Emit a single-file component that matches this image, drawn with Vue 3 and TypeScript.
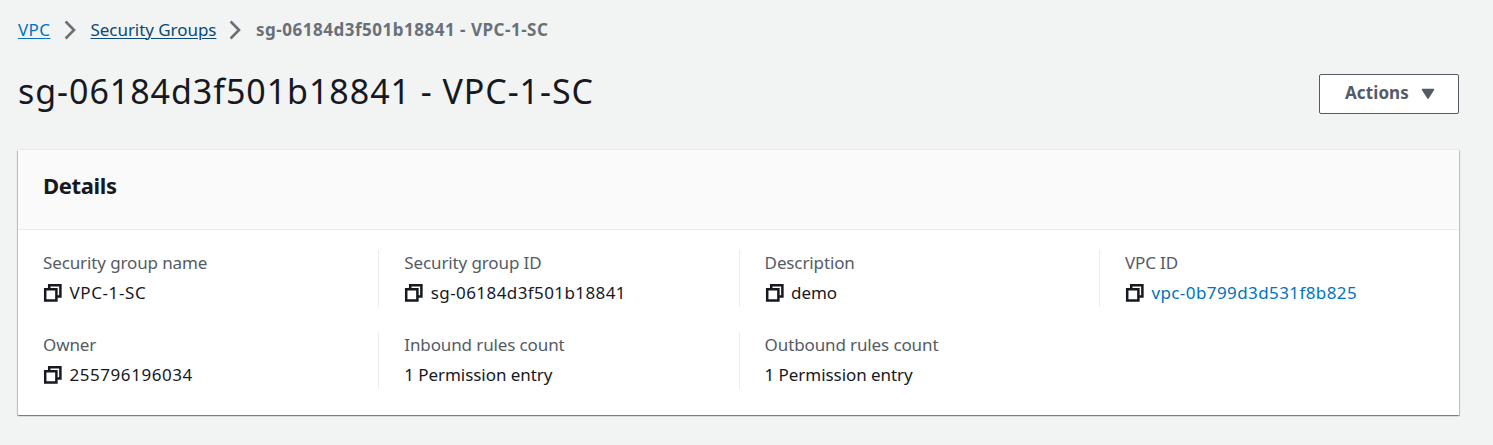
<script setup lang="ts">
interface Field {
  label: string
  value: string
  copy?: boolean
  link?: boolean
  kind: string
}

const groupId = 'sg-06184d3f501b18841'
const groupName = 'VPC-1-SC'

const fields: Field[] = [
  { label: 'Security group name', value: groupName, copy: true, kind: 'name' },
  { label: 'Security group ID', value: groupId, copy: true, kind: 'id' },
  { label: 'Description', value: 'demo', copy: true, kind: 'text' },
  { label: 'VPC ID', value: 'vpc-0b799d3d531f8b825', copy: true, link: true, kind: 'id' },
  { label: 'Owner', value: '255796196034', copy: true, kind: 'number' },
  { label: 'Inbound rules count', value: '1 Permission entry', kind: 'text' },
  { label: 'Outbound rules count', value: '1 Permission entry', kind: 'text' },
]
</script>

<template>
  <main class="page">
    <nav class="crumbs">
      <a class="crumb vpc">VPC</a>
      <svg class="chevron" viewBox="0 0 14 20"><path d="M1.6 1.5 10 10 1.6 18.5" /></svg>
      <a class="crumb groups">Security Groups</a>
      <svg class="chevron" viewBox="0 0 14 20"><path d="M1.6 1.5 10 10 1.6 18.5" /></svg>
      <span class="current">{{ groupId }} - {{ groupName }}</span>
    </nav>
    <header class="heading">
      <h1>{{ groupId }} - {{ groupName }}</h1>
      <button class="actions" type="button">
        <span>Actions</span>
        <svg viewBox="0 0 14 12"><path d="M1.5 1.5h11L7 10.2z" /></svg>
      </button>
    </header>
    <section class="card">
      <div class="card-head"><h2>Details</h2></div>
      <div class="grid">
        <div v-for="f in fields" :key="f.label" class="field">
          <div class="label">{{ f.label }}</div>
          <div class="value">
            <svg v-if="f.copy" class="copy" viewBox="0 0 20 20">
              <path d="M2.2 6.2h11.2v11.2H2.2z" />
              <path d="M6.2 6V2.2h11.2v11.2h-3.8" />
            </svg>
            <span :class="[f.kind, { link: f.link }]">{{ f.value }}</span>
          </div>
        </div>
      </div>
    </section>
  </main>
</template>

<style>
body { margin: 0; background: #f2f3f3; }
</style>

<style scoped>
.page {
  box-sizing: border-box;
  width: 1493px;
  height: 445px;
  padding: 0 34px 0 18px;
  background: #f2f3f3;
  color: #16191f;
  font-family: "Noto Sans", "Open Sans", sans-serif;
  font-size: 17px;
  overflow: hidden;
}
.crumbs {
  display: flex;
  align-items: center;
  height: 60px;
  white-space: nowrap;
}
.crumb, .current { margin-top: -2px; }
.crumb { text-decoration: underline; text-underline-offset: 2px; text-decoration-thickness: 1px; }
.vpc { color: #0073bb; width: 32.5px; letter-spacing: 0.4px; }
.groups { color: #0a4a74; width: 125.5px; letter-spacing: -0.05px; }
.chevron { width: 14px; height: 20px; margin: 0 13px; fill: none; stroke: #687078; stroke-width: 2.6; }
.current { color: #687078; font-weight: 700; font-size: 17px; letter-spacing: 0.51px; }
.heading { display: flex; justify-content: space-between; height: 90px; }
h1 { margin: 8px 0 0; font-size: 34px; line-height: 46px; font-weight: 400; letter-spacing: 0.95px; white-space: nowrap; }
.actions {
  box-sizing: border-box;
  display: flex;
  align-items: center;
  width: 140px;
  height: 40px;
  margin-top: 14px;
  padding: 0 0 3px 25px;
  gap: 12px;
  border: 1px solid #545b64;
  border-radius: 2px;
  background: #fff;
  color: #545b64;
  font: 700 17px "Noto Sans", sans-serif;
  letter-spacing: 0.1px;
}
.actions svg { width: 14px; height: 12px; margin-top: 3px; fill: #545b64; stroke: #545b64; stroke-width: 1.5; stroke-linejoin: round; }
.card {
  box-sizing: border-box;
  width: 1441px;
  height: 265px;
  background: #fff;
  box-shadow: 0 1px 1px 0 rgba(0, 28, 36, 0.3), 1px 1px 1px 0 rgba(0, 28, 36, 0.15), -1px 1px 1px 0 rgba(0, 28, 36, 0.15), 0 0 0 1px rgba(0, 28, 36, 0.04);
}
.card-head { box-sizing: border-box; height: 80px; padding: 20px 25px 0; background: #fafafa; border-bottom: 1px solid #eaeded; }
h2 { margin: 0; font-size: 22px; line-height: 30px; font-weight: 700; letter-spacing: -0.35px; }
.grid { display: grid; grid-template-columns: repeat(4, 360.3px); grid-auto-rows: 57px; row-gap: 25px; padding-top: 20px; }
.field { padding-left: 25px; border-left: 1px solid #eaeded; white-space: nowrap; }
.field:nth-child(4n + 1) { border-left: 0; }
.label { height: 26px; line-height: 25px; color: #545b64; letter-spacing: -0.12px; }
.value { display: flex; align-items: center; height: 33px; line-height: 33px; }
.copy { width: 20px; height: 20px; margin: 0 6.5px 0 0; fill: none; stroke: #16191f; stroke-width: 2.5; }
.name { letter-spacing: 0.6px; }
.id { letter-spacing: 0.41px; }
.number { letter-spacing: 0.55px; }
.text { letter-spacing: -0.06px; }
.link { color: #0073bb; }
</style>
